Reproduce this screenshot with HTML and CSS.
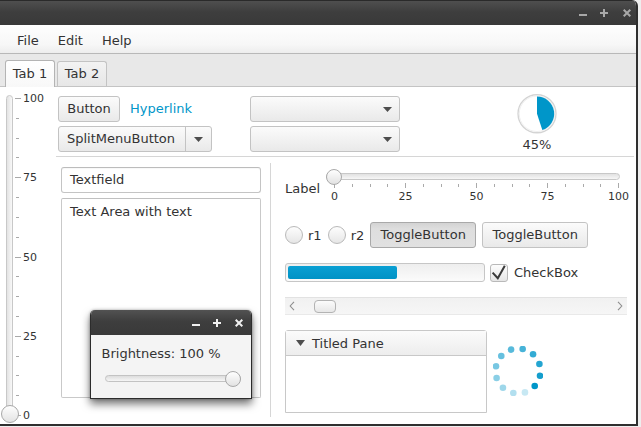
FILE: index.html
```html
<!DOCTYPE html>
<html>
<head>
<meta charset="utf-8">
<link rel="stylesheet" href="styles.css">
</head>
<body>
<div class="window">
  <div class="titlebar">
    <svg class="wb" width="8" height="8" viewBox="0 0 8 8"><rect x="0" y="5" width="8" height="2"/></svg>
    <svg class="wb gap13" width="8" height="8" viewBox="0 0 8 8"><rect x="3" y="0" width="2" height="8"/><rect x="0" y="3" width="8" height="2"/></svg>
    <svg class="wb gap15" width="8" height="8" viewBox="0 0 8 8"><path d="M0.7 0.7L7.3 7.3M7.3 0.7L0.7 7.3"/></svg>
  </div>
  <div class="menubar"><span>File</span><span>Edit</span><span>Help</span></div>
  <div class="tabbar"><div class="tab sel">Tab 1</div><div class="tab">Tab 2</div></div>
  <div class="content">
    <div class="vslider">
      <div class="vtrack"></div>
      <div class="vticks">
        <div class="tk maj"><span>100</span></div>
        <div class="tk"></div><div class="tk"></div><div class="tk"></div>
        <div class="tk maj"><span>75</span></div>
        <div class="tk"></div><div class="tk"></div><div class="tk"></div>
        <div class="tk maj"><span>50</span></div>
        <div class="tk"></div><div class="tk"></div><div class="tk"></div>
        <div class="tk maj"><span>25</span></div>
        <div class="tk"></div><div class="tk"></div><div class="tk"></div>
        <div class="tk maj"><span>0</span></div>
      </div>
      <div class="vthumb"></div>
    </div>
    <div class="main">
      <div class="toparea">
        <div class="cell1"><div class="btn">Button</div><span class="link">Hyperlink</span></div>
        <div class="combo"><svg width="9" height="5" viewBox="0 0 9 5"><path d="M0 0H9L4.5 5Z"/></svg></div>
        <div class="pind">
          <svg width="40" height="40" viewBox="0 0 40 40">
            <circle cx="20" cy="20" r="19.2" fill="#fff" stroke="#d4d4d4" stroke-width="1.4"/>
            <circle cx="20" cy="20" r="18" fill="none" stroke="#efefef" stroke-width="1"/>
            <path d="M20 20 L20 2.6 A17.4 17.4 0 0 1 25.38 36.55 Z" fill="#0096c9"/>
          </svg>
          <span class="pct">45%</span>
        </div>
        <div class="split"><div class="split-l">SplitMenuButton</div><div class="split-r"><svg width="9" height="5" viewBox="0 0 9 5"><path d="M0 0H9L4.5 5Z"/></svg></div></div>
        <div class="combo"><svg width="9" height="5" viewBox="0 0 9 5"><path d="M0 0H9L4.5 5Z"/></svg></div>
      </div>
      <div class="hsep"></div>
      <div class="bottom">
        <div class="leftcol">
          <div class="tfield">Textfield</div>
          <div class="tarea">Text Area with text</div>
        </div>
        <div class="vsep"></div>
        <div class="rightcol">
          <div class="srow">
            <span class="lbl">Label</span>
            <div class="hslider">
              <div class="htrack"></div>
              <div class="hticks">
                <i class="maj"></i><i></i><i></i><i></i>
                <i class="maj"></i><i></i><i></i><i></i>
                <i class="maj"></i><i></i><i></i><i></i>
                <i class="maj"></i><i></i><i></i><i></i>
                <i class="maj"></i>
              </div>
              <div class="hlabels"><b>0</b><b>25</b><b>50</b><b>75</b><b>100</b></div>
              <div class="hthumb"></div>
            </div>
          </div>
          <div class="trow">
            <div class="radio"><span class="rb"></span><span>r1</span></div>
            <div class="radio"><span class="rb"></span><span>r2</span></div>
            <div class="tog on">ToggleButton</div>
            <div class="tog">ToggleButton</div>
          </div>
          <div class="prow">
            <div class="pbar"><div class="pfill" style="width:109px"></div></div>
            <div class="cb"><svg width="18" height="18" viewBox="0 0 18 18"><path d="M2.6 8.6L7.8 14.2L14.8 1.8"/></svg></div>
            <span class="cbl">CheckBox</span>
          </div>
          <div class="sbar">
            <div class="sarrow"><svg width="6" height="10" viewBox="0 0 6 10"><path d="M5 0.8L1.2 5L5 9.2"/></svg></div>
            <div class="strack"><div class="sthumb"></div></div>
            <div class="sarrow"><svg width="6" height="10" viewBox="0 0 6 10"><path d="M1 0.8L4.8 5L1 9.2"/></svg></div>
          </div>
          <div class="tprow">
            <div class="tpane">
              <div class="tphead"><svg width="9" height="6" viewBox="0 0 9 6"><path d="M0 0H9L4.5 6Z"/></svg><span>Titled Pane</span></div>
              <div class="tpbody"></div>
            </div>
            <svg class="spin" width="50" height="50" viewBox="0 0 50 50">
              <g fill="#0096c9">
                <circle cx="29.68" cy="2.99" r="3.3" opacity="0.72"/>
                <circle cx="40.06" cy="8.28" r="3.3" opacity="0.8"/>
                <circle cx="46.40" cy="18.05" r="3.3" opacity="0.86"/>
                <circle cx="47.01" cy="29.68" r="3.3" opacity="0.92"/>
                <circle cx="41.72" cy="40.06" r="3.3" opacity="1"/>
                <circle cx="31.95" cy="46.40" r="3.3" opacity="0.22"/>
                <circle cx="20.32" cy="47.01" r="3.3" opacity="0.3"/>
                <circle cx="9.94" cy="41.72" r="3.3" opacity="0.38"/>
                <circle cx="3.60" cy="31.95" r="3.3" opacity="0.46"/>
                <circle cx="2.99" cy="20.32" r="3.3" opacity="0.53"/>
                <circle cx="8.28" cy="9.94" r="3.3" opacity="0.6"/>
                <circle cx="18.05" cy="3.60" r="3.3" opacity="0.66"/>
              </g>
            </svg>
          </div>
        </div>
      </div>
    </div>
  </div>
  <div class="dlg">
    <div class="dlg-title">
      <svg class="wb" width="8" height="8" viewBox="0 0 8 8"><rect x="0" y="5" width="8" height="2"/></svg>
      <svg class="wb gap13" width="8" height="8" viewBox="0 0 8 8"><rect x="3" y="0" width="2" height="8"/><rect x="0" y="3" width="8" height="2"/></svg>
      <svg class="wb gap14" width="8" height="8" viewBox="0 0 8 8"><path d="M0.7 0.7L7.3 7.3M7.3 0.7L0.7 7.3"/></svg>
    </div>
    <div class="dlg-body">
      <div class="dtext">Brightness: 100 %</div>
      <div class="dslider"><div class="dtrack"></div><div class="dthumb"></div></div>
    </div>
  </div>
</div>
</body>
</html>
```
FILE: styles.css
```css
* { box-sizing: border-box; }
html, body { margin: 0; padding: 0; }
body {
  width: 641px; height: 427px; overflow: hidden;
  background: #eeeeee;
  font-family: "DejaVu Sans", sans-serif; font-size: 13px; color: #333;
}
.window {
  position: relative; width: 638px; height: 426px;
  display: flex; flex-direction: column; background: #fff;
  border-right: 2px solid #2f2f2f; border-bottom: 2px solid #2f2f2f;
  border-top-right-radius: 6px; overflow: hidden;
}
.titlebar {
  flex: none; height: 25px; display: flex; align-items: center; justify-content: flex-end;
  padding-right: 5px;
  background: linear-gradient(#4f4f4f, #3e3e3e 45%, #393939);
  border-top: 1px solid #2a2a2a; color: #a8a8a8;
}
.wb { display: block; }
.wb rect { fill: currentColor; }
.wb path { fill: none; stroke: currentColor; stroke-width: 2; }
.gap13 { margin-left: 13px; }
.gap14 { margin-left: 14px; }
.gap15 { margin-left: 15px; }
.menubar {
  flex: none; height: 29px; display: flex; padding-left: 7.5px;
  background: linear-gradient(#fefefe, #f7f7f7 70%, #ededed);
  border-bottom: 1px solid #b8b8b8;
}
.menubar span { padding: 3px 9.5px 0; line-height: 25px; }
.tabbar {
  flex: none; height: 33px; display: flex; align-items: flex-end; gap: 2px;
  padding-left: 5px; background: #e8e8e8; border-bottom: 1px solid #c4c4c4;
}
.tab {
  width: 50px; height: 25px; line-height: 24px; text-align: center;
  border: 1px solid #c3c3c3; border-bottom: none; border-radius: 3px 3px 0 0;
  background: linear-gradient(#f3f3f3, #e7e7e7);
}
.tab.sel {
  height: 27px; line-height: 26px; margin-bottom: -1px;
  background: linear-gradient(#ffffff, #f8f8f8); border-color: #b4b4b4;
}
.content { flex: 1; display: flex; min-height: 0; }

/* vertical slider */
.vslider { position: relative; flex: none; width: 56px; }
.vtrack {
  position: absolute; left: 6px; top: 8px; width: 7px; height: 320px;
  border: 1px solid #c8c8c8; border-radius: 3.5px;
  background: linear-gradient(to right, #e3e3e3, #f8f8f8);
}
.vthumb {
  position: absolute; left: 1px; top: 318px; width: 18px; height: 18px; border-radius: 50%;
  border: 1px solid #a8a8a8; background: linear-gradient(#fefefe, #e3e3e3);
}
.vticks {
  position: absolute; left: 15px; top: 11.5px; height: 317px;
  display: flex; flex-direction: column; justify-content: space-between;
}
.tk { height: 0; display: flex; align-items: center; }
.tk::before { content: ""; display: block; width: 3px; height: 1px; margin-left: 1px; margin-right: 3px; background: #a9a9a9; }
.tk.maj::before { width: 6px; margin-left: 0; margin-right: 2px; }
.tk span { font-size: 11px; line-height: 13px; }

/* main */
.main { flex: 1; display: flex; flex-direction: column; padding-right: 2px; min-width: 0; }
.toparea {
  display: grid; grid-template-columns: 192px 150px 1fr; grid-template-rows: 26px 26px;
  row-gap: 4px; margin: 9px 0 0 2px;
}
.cell1 { display: flex; align-items: center; }
.btn {
  width: 62px; height: 26px; line-height: 24px; text-align: center;
  border: 1px solid #c3c3c3; border-radius: 3px;
  background: linear-gradient(#fbfbfb, #e9e9e9);
}
.link { margin-left: 10px; color: #0096c9; line-height: 26px; }
.combo {
  width: 150px; height: 26px; display: flex; align-items: center; justify-content: flex-end;
  padding-right: 7px; border: 1px solid #c3c3c3; border-radius: 3px;
  background: linear-gradient(#fbfbfb, #e9e9e9);
}
.combo svg, .split-r svg { display: block; fill: #4e4e4e; }
.split {
  width: 154px; height: 26px; display: flex;
  border: 1px solid #c3c3c3; border-radius: 3px;
  background: linear-gradient(#fbfbfb, #e9e9e9);
}
.split-l { width: 127px; padding-left: 8px; line-height: 24px; border-right: 1px solid #c3c3c3; }
.split-r { flex: 1; display: flex; align-items: center; justify-content: center; }
.pind {
  grid-column: 3; grid-row: 1 / span 2; width: 40px; margin: -2px 0 0 117px;
  display: flex; flex-direction: column; align-items: center;
}
.pind svg { display: block; }
.pct { margin-top: 3.5px; line-height: 15px; white-space: nowrap; }
.hsep { height: 1px; margin-top: 4px; background: #d6d6d6; flex: none; }

.bottom { flex: 1; display: flex; min-height: 0; }
.leftcol { flex: none; width: 214px; padding: 10px 0 0 5px; }
.tfield {
  width: 200px; height: 26px; line-height: 24px; padding-left: 8px;
  border: 1px solid #c4c4c4; border-top-color: #bcbcbc; border-radius: 3px; background: #fff;
  box-shadow: inset 0 1px 1px rgba(0,0,0,0.03);
}
.tarea {
  width: 200px; height: 200px; margin-top: 5px; padding: 4.5px 8px;
  line-height: 15px; border: 1px solid #c9c9c9; border-top-color: #c0c0c0; border-radius: 2px; background: #fff;
}
.vsep { flex: none; width: 1px; margin: 6px 0 7px; background: #d6d6d6; }

.rightcol { flex: 1; display: flex; flex-direction: column; align-items: flex-start; padding: 12px 0 0 14px; }
.srow { display: flex; align-items: flex-start; }
.lbl { width: 41px; margin-top: 11.5px; line-height: 15px; }
.hslider { position: relative; width: 294px; height: 36px; }
.htrack {
  position: absolute; left: 0; right: 0; top: 4px; height: 7px;
  border: 1px solid #c8c8c8; border-radius: 3.5px;
  background: linear-gradient(#e1e1e1, #f7f7f7);
}
.hthumb {
  position: absolute; left: 0; top: 0; width: 16px; height: 16px; border-radius: 50%;
  border: 1px solid #a9a9a9; background: linear-gradient(#fefefe, #e2e2e2);
}
.hticks {
  position: absolute; left: 8px; width: 285px; top: 14px; height: 5px;
  display: flex; justify-content: space-between; align-items: flex-start;
}
.hticks i { display: block; width: 1px; height: 3px; margin-top: 1px; background: #aaaaaa; }
.hticks i.maj { height: 5px; margin-top: 0; }
.hlabels {
  position: absolute; left: 8.5px; width: 284px; top: 20.5px;
  display: flex; justify-content: space-between;
}
.hlabels b { width: 0; display: flex; justify-content: center; font-weight: normal; font-size: 11px; line-height: 13px; white-space: nowrap; }

.trow { display: flex; align-items: center; gap: 6px; height: 26px; margin-top: 17px; }
.radio { display: flex; align-items: center; gap: 5px; line-height: 15px; }
.rb {
  display: block; width: 18px; height: 18px; border-radius: 50%;
  border: 1px solid #b9b9b9; background: linear-gradient(#fdfdfd, #e6e6e6);
}
.tog {
  width: 106px; height: 26px; line-height: 24px; text-align: center;
  border: 1px solid #c3c3c3; border-radius: 3px;
  background: linear-gradient(#fbfbfb, #e9e9e9);
}
.tog.on {
  background: linear-gradient(#d3d3d3, #dedede 25%, #e1e1e1);
  border-color: #a9a9a9;
}
.prow { display: flex; align-items: center; height: 19px; margin-top: 15px; }
.pbar {
  width: 200px; height: 19px; padding: 2px;
  border: 1px solid #c6c6c6; border-radius: 3px;
  background: linear-gradient(#eeeeee, #fbfbfb);
}
.pfill { height: 13px; border-radius: 2px; background: linear-gradient(#0a9fd3, #0092c5); }
.cb {
  width: 18px; height: 18px; margin-left: 5px; border: 1px solid #b9b9b9; border-radius: 3px;
  background: linear-gradient(#fdfdfd, #e6e6e6); position: relative;
}
.cb svg { position: absolute; left: -1px; top: -1px; display: block; }
.cb path { fill: none; stroke: #3a3a3a; stroke-width: 2; }
.cbl { margin-left: 6px; line-height: 15px; }

.sbar {
  display: flex; width: 342px; height: 18px; margin-top: 15px;
  background: linear-gradient(#f1f1f1, #f6f6f6);
  border-top: 1px solid #e2e2e2; border-bottom: 1px solid #e9e9e9;
}
.sarrow { width: 14px; display: flex; align-items: center; justify-content: center; }
.sarrow svg { display: block; }
.sarrow path { fill: none; stroke: #8e8e8e; stroke-width: 1.1; }
.strack { flex: 1; display: flex; align-items: center; }
.sthumb {
  width: 22px; height: 13px; margin-left: 15px; border-radius: 4px;
  border: 1px solid #b3b3b3; background: linear-gradient(#fcfcfc, #e7e7e7);
}

.tprow { display: flex; align-items: flex-start; margin-top: 15px; }
.tpane { width: 202px; height: 83px; border: 1px solid #c8c8c8; border-radius: 3px 3px 0 0; background: #fff; display: flex; flex-direction: column; }
.tphead {
  height: 25px; display: flex; align-items: center; padding-left: 10px;
  border-bottom: 1px solid #c8c8c8;
  background: linear-gradient(#fbfbfb, #ededed);
}
.tphead svg { display: block; fill: #4e4e4e; margin-right: 7px; }
.tphead span { line-height: 15px; }
.tpbody { flex: 1; }
.spin { display: block; margin: 16px 0 0 6px; }

/* small window */
.dlg {
  position: absolute; left: 90px; top: 310px; width: 162px;
  border: 1px solid #2c2c2c; border-top: none; border-radius: 5px 5px 0 0;
  background: #f4f4f4; overflow: hidden;
  box-shadow: 0 5px 9px rgba(0,0,0,0.55), 0 0 3px rgba(0,0,0,0.3);
}
.dlg-title {
  height: 25px; display: flex; align-items: center; justify-content: flex-end;
  padding-right: 8px; padding-top: 1px; color: #f0f0f0;
  background: linear-gradient(#525252, #3e3e3e 45%, #393939);
}
.dlg-body { height: 63px; padding: 10.5px 10px 0 10.5px; }
.dtext { line-height: 15px; white-space: nowrap; }
.dslider { position: relative; width: 136px; height: 16px; margin: 10px 0 0 3.5px; }
.dtrack {
  position: absolute; left: 0; right: 0; top: 4.5px; height: 7px;
  border: 1px solid #c3c3c3; border-radius: 3.5px;
  background: linear-gradient(#dddddd, #f6f6f6);
}
.dthumb {
  position: absolute; right: 0; top: 0; width: 16px; height: 16px; border-radius: 50%;
  border: 1px solid #a8a8a8; background: linear-gradient(#fefefe, #e2e2e2);
}
```
